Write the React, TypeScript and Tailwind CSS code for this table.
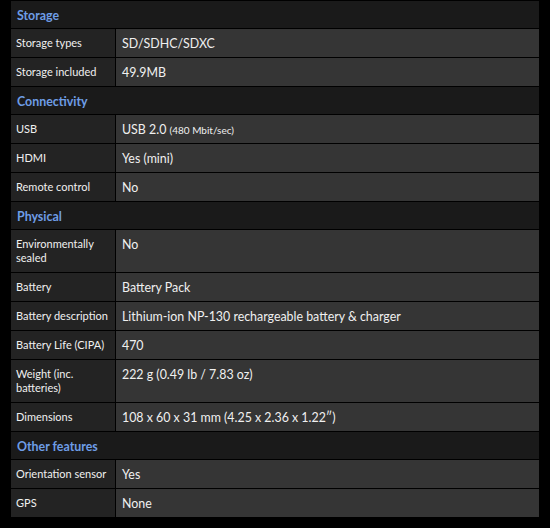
type Row =
  | { kind: "head"; title: string }
  | { kind: "row"; label: string; value: React.ReactNode; tall?: boolean };

const ROWS: Row[] = [
  { kind: "head", title: "Storage" },
  { kind: "row", label: "Storage types", value: "SD/SDHC/SDXC" },
  { kind: "row", label: "Storage included", value: "49.9MB" },
  { kind: "head", title: "Connectivity" },
  {
    kind: "row",
    label: "USB",
    value: (
      <>
        USB 2.0 <span className="text-[10px]">(480 Mbit/sec)</span>
      </>
    ),
  },
  { kind: "row", label: "HDMI", value: "Yes (mini)" },
  { kind: "row", label: "Remote control", value: "No" },
  { kind: "head", title: "Physical" },
  { kind: "row", label: "Environmentally sealed", value: "No", tall: true },
  { kind: "row", label: "Battery", value: "Battery Pack" },
  {
    kind: "row",
    label: "Battery description",
    value: "Lithium-ion NP-130 rechargeable battery & charger",
  },
  { kind: "row", label: "Battery Life (CIPA)", value: "470" },
  { kind: "row", label: "Weight (inc. batteries)", value: "222 g (0.49 lb / 7.83 oz)", tall: true },
  { kind: "row", label: "Dimensions", value: "108 x 60 x 31 mm (4.25 x 2.36 x 1.22″)" },
  { kind: "head", title: "Other features" },
  { kind: "row", label: "Orientation sensor", value: "Yes" },
  { kind: "row", label: "GPS", value: "None" },
];

export default function App() {
  return (
    <div
      className="min-h-screen bg-black px-[11px] pt-px"
      style={{ fontFamily: "Lato, 'Open Sans', sans-serif" }}
    >
      <div className="flex w-[528px] flex-col gap-px">
        {ROWS.map((r, i) =>
          r.kind === "head" ? (
            <div
              key={i}
              className="flex h-[27px] items-center bg-[#1a1a1a] pl-[6px] pt-[3px] text-[12.4px] font-bold text-[#6e9de6]"
            >
              {r.title}
            </div>
          ) : (
            <div
              key={i}
              className={`grid grid-cols-[104px_1fr] gap-px ${r.tall ? "h-[42px]" : "h-[28px]"}`}
            >
              <div className="bg-[#232323] pl-[5px] pr-1 pt-[7px] text-[11px] leading-[14px] text-[#f0f0f0]">
                {r.label}
              </div>
              <div className="bg-[#353535] pl-[6px] pt-[8px] text-[12.4px] leading-[14px] text-[#f0f0f0]">
                {r.value}
              </div>
            </div>
          )
        )}
      </div>
    </div>
  );
}
